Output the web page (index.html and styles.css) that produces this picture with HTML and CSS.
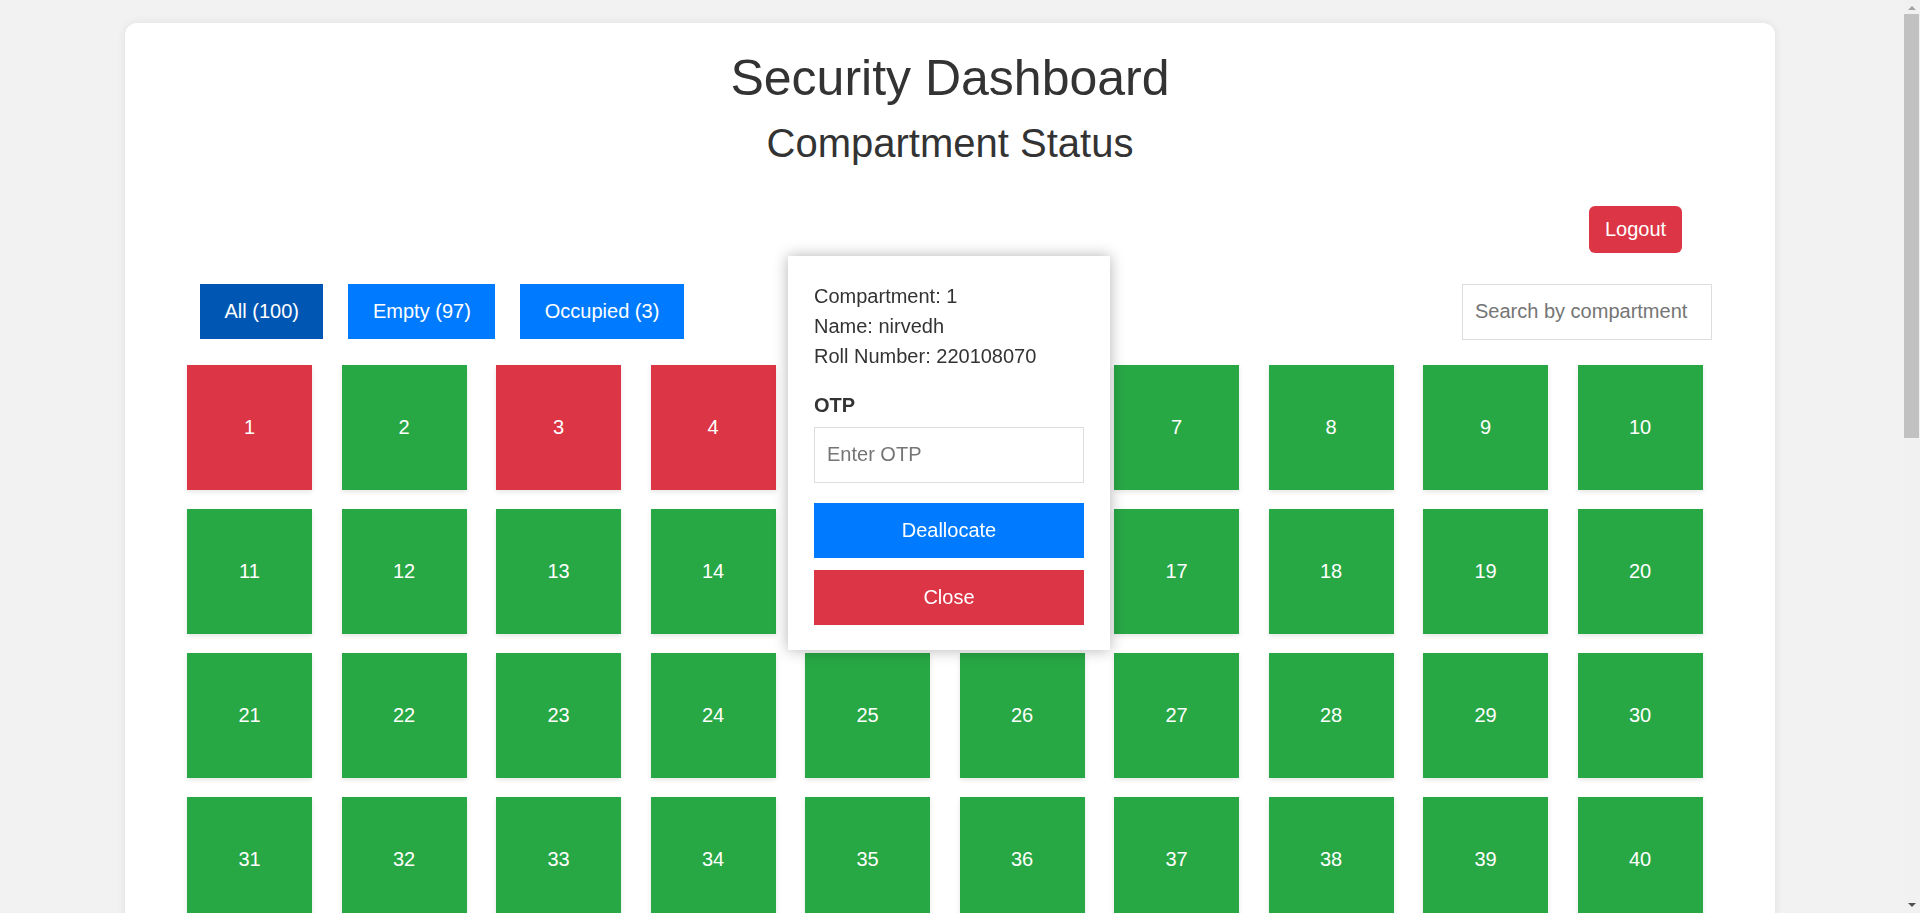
FILE: index.html
```html
<!DOCTYPE html>
<html lang="en">
<head>
<meta charset="utf-8">
<title>Security Dashboard</title>
<link rel="stylesheet" href="styles.css">
</head>
<body>
<div class="card">
  <h1 class="title">Security Dashboard</h1>
  <h2 class="subtitle">Compartment Status</h2>
  <div class="logout-row"><button class="logout">Logout</button></div>
  <div class="controls">
    <div class="filters">
      <button class="filter active">All (100)</button>
      <button class="filter">Empty (97)</button>
      <button class="filter">Occupied (3)</button>
    </div>
    <input class="search" type="text" placeholder="Search by compartment">
  </div>
  <div class="grid">
    <div class="box occ">1</div><div class="box">2</div><div class="box occ">3</div><div class="box occ">4</div><div class="box">5</div>
    <div class="box">6</div><div class="box">7</div><div class="box">8</div><div class="box">9</div><div class="box">10</div>
    <div class="box">11</div><div class="box">12</div><div class="box">13</div><div class="box">14</div><div class="box">15</div>
    <div class="box">16</div><div class="box">17</div><div class="box">18</div><div class="box">19</div><div class="box">20</div>
    <div class="box">21</div><div class="box">22</div><div class="box">23</div><div class="box">24</div><div class="box">25</div>
    <div class="box">26</div><div class="box">27</div><div class="box">28</div><div class="box">29</div><div class="box">30</div>
    <div class="box">31</div><div class="box">32</div><div class="box">33</div><div class="box">34</div><div class="box">35</div>
    <div class="box">36</div><div class="box">37</div><div class="box">38</div><div class="box">39</div><div class="box">40</div>
    <div class="box">41</div><div class="box">42</div><div class="box">43</div><div class="box">44</div><div class="box">45</div>
    <div class="box">46</div><div class="box">47</div><div class="box">48</div><div class="box">49</div><div class="box">50</div>
    <div class="box">51</div><div class="box">52</div><div class="box">53</div><div class="box">54</div><div class="box">55</div>
    <div class="box">56</div><div class="box">57</div><div class="box">58</div><div class="box">59</div><div class="box">60</div>
    <div class="box">61</div><div class="box">62</div><div class="box">63</div><div class="box">64</div><div class="box">65</div>
    <div class="box">66</div><div class="box">67</div><div class="box">68</div><div class="box">69</div><div class="box">70</div>
    <div class="box">71</div><div class="box">72</div><div class="box">73</div><div class="box">74</div><div class="box">75</div>
    <div class="box">76</div><div class="box">77</div><div class="box">78</div><div class="box">79</div><div class="box">80</div>
    <div class="box">81</div><div class="box">82</div><div class="box">83</div><div class="box">84</div><div class="box">85</div>
    <div class="box">86</div><div class="box">87</div><div class="box">88</div><div class="box">89</div><div class="box">90</div>
    <div class="box">91</div><div class="box">92</div><div class="box">93</div><div class="box">94</div><div class="box">95</div>
    <div class="box">96</div><div class="box">97</div><div class="box">98</div><div class="box">99</div><div class="box">100</div>
  </div>
</div>

<div class="popup">
  <div class="info">
    <div>Compartment: 1</div>
    <div>Name: nirvedh</div>
    <div>Roll Number: 220108070</div>
  </div>
  <label class="otp-label">OTP</label>
  <input class="otp-input" type="text" placeholder="Enter OTP">
  <button class="pbtn dealloc">Deallocate</button>
  <button class="pbtn close">Close</button>
</div>

<div class="fake-scrollbar" aria-hidden="true">
  <div class="sb-arrow sb-up"></div>
  <div class="sb-thumb"></div>
  <div class="sb-rest"></div>
  <div class="sb-arrow sb-down"></div>
</div>
</body>
</html>
```

FILE: styles.css
```css
* { box-sizing: border-box; }

html, body {
  margin: 0;
  padding: 0;
}

body {
  background: #f2f2f2;
  font-family: "Liberation Sans", Arial, sans-serif;
  font-size: 20px;
  color: #333;
  padding-right: 20px;
}

.card {
  max-width: 1650px;
  margin: 23px auto 25px;
  background: #fff;
  border-radius: 12px;
  box-shadow: 0 0 10px rgba(0, 0, 0, 0.08);
  padding: 27px 0 25px;
}

.title {
  margin: 0;
  text-align: center;
  font-size: 50px;
  font-weight: normal;
  color: #333;
  line-height: 1.15;
}

.subtitle {
  margin: 12px 0 0;
  text-align: center;
  font-size: 40px;
  font-weight: normal;
  color: #333;
  line-height: 1.15;
}

.logout-row {
  display: flex;
  justify-content: flex-end;
  padding-right: 93px;
  margin-top: 40px;
}

.logout {
  background: #dc3545;
  color: #fff;
  border: none;
  border-radius: 6px;
  font-family: inherit;
  font-size: 20px;
  line-height: 23px;
  padding: 12px 16px;
  width: 93px;
  height: 47px;
}

.controls {
  display: flex;
  justify-content: space-between;
  align-items: center;
  padding: 0 63px 0 75px;
  margin-top: 31px;
}

.filters {
  display: flex;
  gap: 25px;
}

.filter {
  background: #007bff;
  color: #fff;
  border: none;
  font-family: inherit;
  font-size: 20px;
  line-height: 23px;
  padding: 16px 24.5px;
  height: 55px;
}

.filter.active {
  background: #0056b3;
}

.search {
  width: 250px;
  height: 56px;
  border: 1px solid #ddd;
  padding: 0 12px;
  font-family: inherit;
  font-size: 20px;
  color: #333;
  outline: none;
}

.search::placeholder,
.otp-input::placeholder {
  color: #757575;
}

.grid {
  display: grid;
  grid-template-columns: repeat(10, 125px);
  column-gap: 29.5px;
  row-gap: 19px;
  padding-left: 62px;
  margin-top: 25px;
}

.box {
  height: 125px;
  background: #28a745;
  color: #fff;
  display: flex;
  align-items: center;
  justify-content: center;
  font-size: 20px;
  box-shadow: 0 2px 5px rgba(0, 0, 0, 0.1);
}

.box.occ {
  background: #dc3545;
}

.popup {
  position: fixed;
  top: calc(50% - 4px);
  left: calc(50% - 11px);
  transform: translate(-50%, -50%);
  width: 322px;
  background: #fff;
  padding: 25px 26px;
  box-shadow: 0 0 14px rgba(0, 0, 0, 0.3);
  display: flex;
  flex-direction: column;
}

.info {
  line-height: 30px;
  font-size: 20px;
  color: #333;
}

.otp-label {
  display: block;
  margin-top: 23px;
  font-weight: bold;
  font-size: 20px;
  line-height: 23px;
  color: #333;
}

.otp-input {
  margin-top: 10px;
  width: 270px;
  height: 56px;
  border: 1px solid #ddd;
  padding: 0 12px;
  font-family: inherit;
  font-size: 20px;
  outline: none;
}

.pbtn {
  width: 270px;
  height: 55px;
  border: none;
  color: #fff;
  font-family: inherit;
  font-size: 20px;
  line-height: 23px;
}

.dealloc {
  margin-top: 20px;
  background: #007bff;
}

.close {
  margin-top: 12px;
  background: #dc3545;
}

/* imitation of the browser's vertical scrollbar seen in the reference */
.fake-scrollbar {
  position: fixed;
  top: 0;
  right: 0;
  bottom: 0;
  width: 17px;
  background: #f1f1f1;
  display: flex;
  flex-direction: column;
  align-items: center;
}

.sb-arrow {
  width: 0;
  height: 0;
  border-left: 4px solid transparent;
  border-right: 4px solid transparent;
  margin: 6px 0;
}

.sb-up {
  border-bottom: 4px solid #a3a3a3;
}

.sb-down {
  border-top: 4px solid #505050;
}

.sb-thumb {
  width: 15px;
  height: 424px;
  margin-top: -2px;
  background: #c1c1c1;
}

.sb-rest {
  flex: 1;
}
```
